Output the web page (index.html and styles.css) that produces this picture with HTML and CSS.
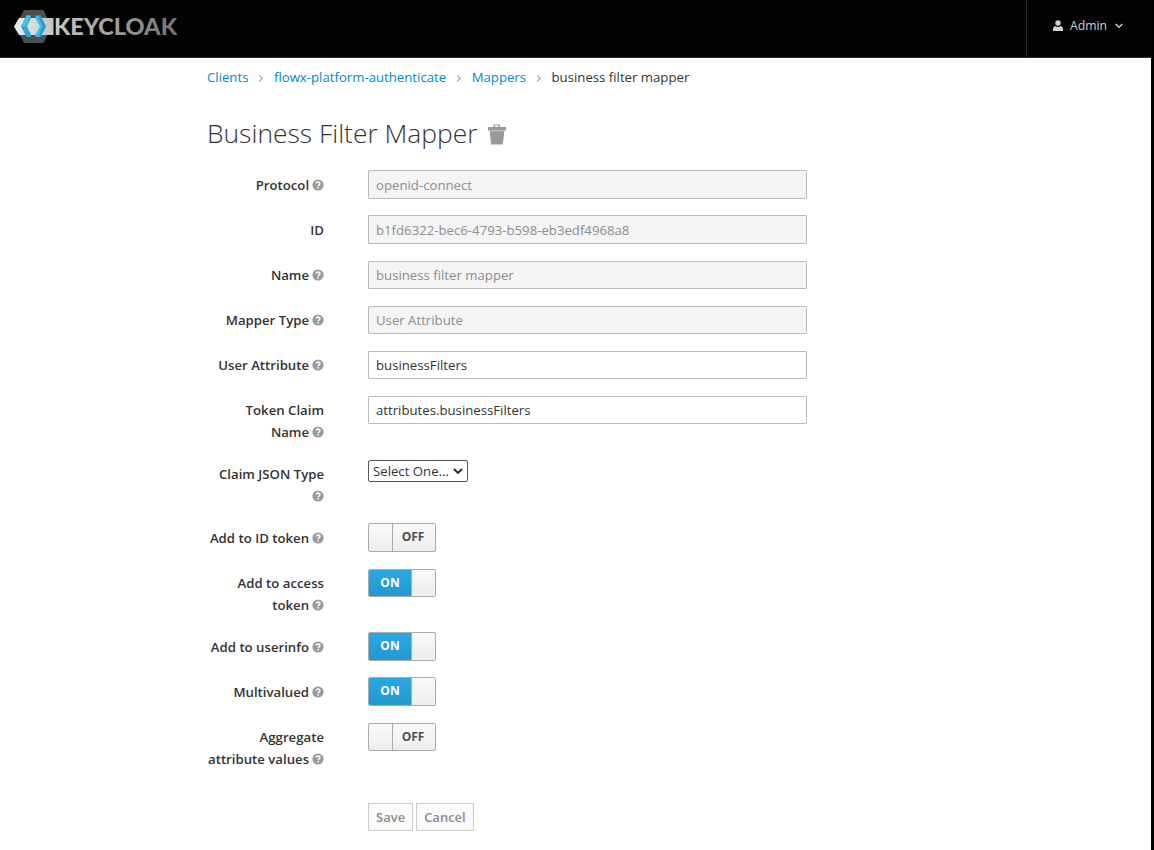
FILE: index.html
```html
<!DOCTYPE html>
<html lang="en">
<head>
<meta charset="utf-8">
<title>Business Filter Mapper</title>
<link rel="stylesheet" href="styles.css">
</head>
<body>
<svg class="defs" width="0" height="0">
  <symbol id="help" viewBox="0 0 12 12"><circle cx="6" cy="6" r="5.600" fill="#999"/><path d="M4.100 4.500C4.400 3.300 5.200 3 6 3C7.200 3 7.900 3.700 7.900 4.600C7.900 5.800 6.200 5.800 6.200 7.200" fill="none" stroke="#fff" stroke-width="1.500"/><path d="M5.400 8h1.500v1.400H5.400z" fill="#fff"/></symbol>
</svg>
<header class="navbar">
  <svg class="logo" width="166" height="36" viewBox="0 0 166 36">
    <defs>
      <linearGradient id="band" x1="0" x2="1"><stop offset="0" stop-color="#eee"/><stop offset="1" stop-color="#c4c4c4"/></linearGradient>
      <linearGradient id="word" gradientUnits="userSpaceOnUse" x1="40" x2="164" y1="0" y2="0"><stop offset="0" stop-color="#c9c9c9"/><stop offset="1" stop-color="#707070"/></linearGradient>
    </defs>
    <path d="M10 2h19.500l8 16.500-8 16.500H10L1.500 18.500z" fill="#4d4d4d"/>
    <path d="M5 10h34.500v17H5L0 18.500z" fill="url(#band)"/>
    <path d="M12.500 7.500H17V10L13 18.500l4 8V29h-4.500L7 18.500z" fill="#27abd6"/>
    <path d="M12.500 7.500H17L11.500 18.500H7z" fill="#4bbfe3"/>
    <path d="M21.500 7.500H26.500L32 18.500 26.500 29h-5v-2.500l4.500-8-4.500-8.500z" fill="#3fbce2"/>
    <path d="M26.500 7.500L32 18.500 26.500 29 24.500 28l4.500-9.500L24.500 9z" fill="#1f9fca"/>
    <text x="40" y="26.500" textLength="123" lengthAdjust="spacingAndGlyphs" fill="url(#word)">KEYCLOAK</text>
  </svg>
  <div class="user">
    <svg width="12" height="14" viewBox="0 0 12 14"><circle cx="6" cy="4" r="2.700" fill="#d1d1d1"/><path d="M1 12V9.500Q1 7.500 3.500 7Q6 8.800 8.500 7Q11 7.500 11 9.500V12z" fill="#d1d1d1"/></svg>
    <span>Admin</span>
    <svg class="caret" width="8" height="6" viewBox="0 0 8 6"><path d="M.6 1L4 4.200 7.400 1" fill="none" stroke="#d1d1d1" stroke-width="1.400"/></svg>
  </div>
</header>
<main class="content">
  <nav class="crumbs"><a>Clients</a><i></i><a>flowx-platform-authenticate</a><i></i><a>Mappers</a><i></i><span>business filter mapper</span></nav>
  <h1><span>Business Filter Mapper</span><svg width="18" height="21" viewBox="0 0 18 21"><path d="M0 3h5.500V.5h6.500V3H18v3.500H0zM7 3h3.500V1.500H7z" fill="#999" fill-rule="evenodd"/><path d="M1.500 6h15L14.800 20.500H3.200z" fill="#999"/><path d="M1.500 6.800h15" stroke="#ddd" stroke-width=".8"/></svg></h1>
  <form>
    <div class="row"><label><b>Protocol</b> <svg class="help"><use href="#help"/></svg></label><input disabled value="openid-connect"></div>
    <div class="row"><label><b>ID</b></label><input disabled value="b1fd6322-bec6-4793-b598-eb3edf4968a8"></div>
    <div class="row low"><label><b>Name</b> <svg class="help"><use href="#help"/></svg></label><input disabled value="business filter mapper"></div>
    <div class="row low"><label><b>Mapper Type</b> <svg class="help"><use href="#help"/></svg></label><input disabled value="User Attribute"></div>
    <div class="row low"><label><b>User Attribute</b> <svg class="help"><use href="#help"/></svg></label><input value="businessFilters"></div>
    <div class="row low tall"><label><b>Token Claim<br>Name</b> <svg class="help"><use href="#help"/></svg></label><input value="attributes.businessFilters"></div>
    <div class="row low tall"><label><b>Claim JSON Type</b><br><svg class="help"><use href="#help"/></svg></label><div class="select"><span>Select One...</span><svg width="10" height="7" viewBox="0 0 10 7"><path d="M1 1l4 4 4-4" fill="none" stroke="#222" stroke-width="1.800"/></svg></div></div>
    <div class="row"><label><b>Add to ID token</b> <svg class="help"><use href="#help"/></svg></label><div class="switch off"><i></i><span>OFF</span></div></div>
    <div class="row low tall"><label><b>Add to access<br>token</b> <svg class="help"><use href="#help"/></svg></label><div class="switch on"><span>ON</span><i></i></div></div>
    <div class="row"><label><b>Add to userinfo</b> <svg class="help"><use href="#help"/></svg></label><div class="switch on"><span>ON</span><i></i></div></div>
    <div class="row"><label><b>Multivalued</b> <svg class="help"><use href="#help"/></svg></label><div class="switch on"><span>ON</span><i></i></div></div>
    <div class="row low tall"><label><b>Aggregate<br>attribute values</b> <svg class="help"><use href="#help"/></svg></label><div class="switch off"><i></i><span>OFF</span></div></div>
    <div class="actions"><button disabled>Save</button><button disabled>Cancel</button></div>
  </form>
</main>
</body>
</html>
```
FILE: styles.css
```css
* { box-sizing: border-box; }
body {
  margin: 0;
  height: 850px;
  overflow: hidden;
  border-right: 3px solid #000;
  background: #fff;
  color: #333;
  font: 13.2px/22px "Open Sans", sans-serif;
}
.defs { display: none; }
.navbar {
  display: flex;
  justify-content: space-between;
  height: 58px;
  background: #030303;
  border-bottom: 1px solid #292929;
}
.logo { margin: 8px 0 0 14px; }
.logo text { font: 900 23px Lato, sans-serif; }
.user {
  display: flex;
  align-items: center;
  width: 125px;
  padding: 0 0 6px 25px;
  border-left: 1px solid #2b2b2b;
  color: #d1d1d1;
  font-size: 12.2px;
}
.user span { margin: 0 8px 0 6px; }
.content { padding: 8px 0 0 207px; }
.crumbs { display: flex; align-items: center; height: 22px; white-space: nowrap; }
.crumbs a { color: #0088ce; }
.crumbs i {
  width: 5px;
  height: 5px;
  margin: 2px 12px 0 8.5px;
  border: solid #999;
  border-width: 1.2px 1.2px 0 0;
  transform: rotate(45deg);
}
h1 {
  display: flex;
  align-items: center;
  gap: 10.5px;
  height: 40px;
  margin: 26px 0 16px;
  font-size: 26.4px;
  font-weight: 300;
  line-height: 40px;
  white-space: nowrap;
}
h1 span { padding-bottom: 2px; }
.row {
  display: grid;
  grid-template-columns: 117px 439px;
  column-gap: 44px;
  align-items: start;
  height: 45px;
}
.tall { height: 64px; }
.row label { padding-top: 4px; text-align: right; white-space: nowrap; }
.row b { font-weight: 600; }
.help { width: 12px; height: 12px; margin-left: -0.5px; vertical-align: -1px; }
input {
  width: 439px;
  height: 29px;
  padding: 1px 7px 0;
  border: 1px solid #bbb;
  border-radius: 1px;
  background: #fff;
  color: #333;
  font: inherit;
}
input:disabled { background: #f4f4f4; color: #8b8d8f; }
.low input, .low .switch { height: 28px; margin-top: 1px; }
.low input { padding: 0 7px 1px; }
.select {
  display: flex;
  align-items: center;
  justify-content: space-between;
  width: 100px;
  height: 22px;
  margin-top: 1px;
  padding: 0 4px;
  border: 1px solid #555;
  border-radius: 2px;
  white-space: nowrap;
}
.switch {
  display: flex;
  width: 68px;
  height: 29px;
  border: 1px solid #aaa;
  border-radius: 2px;
  background: linear-gradient(#fafafa, #ededed);
  font-size: 12px;
  font-weight: 700;
  line-height: 26px;
  text-align: center;
  overflow: hidden;
}
.switch i { flex: 0 0 24px; }
.switch span { flex: 1; }
.off i { flex-basis: 23px; }
.off span { padding-right: 2px; border-left: 1px solid #aaa; color: #4d5258; }
.on span { background: linear-gradient(#29a8e6, #2298ce); color: #fff; }
.on i { border-left: 1px solid #aaa; }
.actions { display: flex; gap: 3px; padding: 17px 0 0 161px; }
button {
  height: 28px;
  padding: 0 7px;
  border: 1px solid #ccc;
  background: #fafafa;
  color: #8b8d8f;
  font: 600 13px "Open Sans", sans-serif;
}
```
